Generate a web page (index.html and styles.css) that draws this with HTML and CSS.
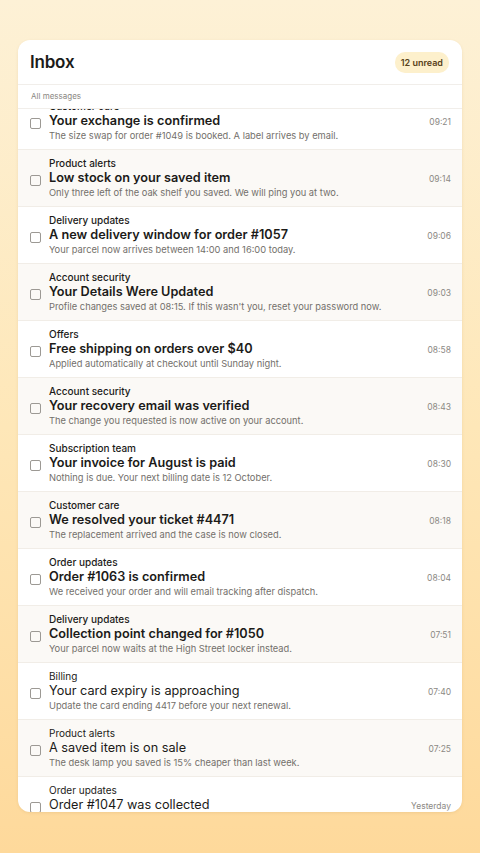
FILE: index.html
```html
<!DOCTYPE html>
<html lang="en">
<head>
  <meta charset="UTF-8">
  <title>Inbox</title>
  <link rel="stylesheet" href="styles.css">
</head>
<body>
  <div class="card">
    <div class="card-head">
      <h1>Inbox</h1>
      <span class="badge">12 unread</span>
    </div>
    <div class="sub">All messages</div>
    <div class="list">
      <ul class="rows">
        <li class="row unread">
          <span class="check"></span>
          <div class="body">
            <div class="sender">Customer care</div>
            <div class="title">Your exchange is confirmed</div>
            <div class="preview">The size swap for order #1049 is booked. A label arrives by email.</div>
          </div>
          <span class="time">09:21</span>
        </li>
        <li class="row unread">
          <span class="check"></span>
          <div class="body">
            <div class="sender">Product alerts</div>
            <div class="title">Low stock on your saved item</div>
            <div class="preview">Only three left of the oak shelf you saved. We will ping you at two.</div>
          </div>
          <span class="time">09:14</span>
        </li>
        <li class="row unread">
          <span class="check"></span>
          <div class="body">
            <div class="sender">Delivery updates</div>
            <div class="title">A new delivery window for order #1057</div>
            <div class="preview">Your parcel now arrives between 14:00 and 16:00 today.</div>
          </div>
          <span class="time">09:06</span>
        </li>
        <li class="row unread">
          <span class="check"></span>
          <div class="body">
            <div class="sender">Account security</div>
            <div class="title">Your Details Were Updated</div>
            <div class="preview">Profile changes saved at 08:15. If this wasn't you, reset your password now.</div>
          </div>
          <span class="time">09:03</span>
        </li>
        <li class="row unread">
          <span class="check"></span>
          <div class="body">
            <div class="sender">Offers</div>
            <div class="title">Free shipping on orders over $40</div>
            <div class="preview">Applied automatically at checkout until Sunday night.</div>
          </div>
          <span class="time">08:58</span>
        </li>
        <li class="row unread">
          <span class="check"></span>
          <div class="body">
            <div class="sender">Account security</div>
            <div class="title">Your recovery email was verified</div>
            <div class="preview">The change you requested is now active on your account.</div>
          </div>
          <span class="time">08:43</span>
        </li>
        <li class="row unread">
          <span class="check"></span>
          <div class="body">
            <div class="sender">Subscription team</div>
            <div class="title">Your invoice for August is paid</div>
            <div class="preview">Nothing is due. Your next billing date is 12 October.</div>
          </div>
          <span class="time">08:30</span>
        </li>
        <li class="row unread">
          <span class="check"></span>
          <div class="body">
            <div class="sender">Customer care</div>
            <div class="title">We resolved your ticket #4471</div>
            <div class="preview">The replacement arrived and the case is now closed.</div>
          </div>
          <span class="time">08:18</span>
        </li>
        <li class="row unread">
          <span class="check"></span>
          <div class="body">
            <div class="sender">Order updates</div>
            <div class="title">Order #1063 is confirmed</div>
            <div class="preview">We received your order and will email tracking after dispatch.</div>
          </div>
          <span class="time">08:04</span>
        </li>
        <li class="row unread">
          <span class="check"></span>
          <div class="body">
            <div class="sender">Delivery updates</div>
            <div class="title">Collection point changed for #1050</div>
            <div class="preview">Your parcel now waits at the High Street locker instead.</div>
          </div>
          <span class="time">07:51</span>
        </li>
        <li class="row">
          <span class="check"></span>
          <div class="body">
            <div class="sender">Billing</div>
            <div class="title">Your card expiry is approaching</div>
            <div class="preview">Update the card ending 4417 before your next renewal.</div>
          </div>
          <span class="time">07:40</span>
        </li>
        <li class="row">
          <span class="check"></span>
          <div class="body">
            <div class="sender">Product alerts</div>
            <div class="title">A saved item is on sale</div>
            <div class="preview">The desk lamp you saved is 15% cheaper than last week.</div>
          </div>
          <span class="time">07:25</span>
        </li>
        <li class="row">
          <span class="check"></span>
          <div class="body">
            <div class="sender">Order updates</div>
            <div class="title">Order #1047 was collected</div>
            <div class="preview">Picked up from the locker on Market Road.</div>
          </div>
          <span class="time">Yesterday</span>
        </li>
      </ul>
    </div>
  </div>
</body>
</html>
```

FILE: styles.css
```css
body {
  margin: 0;
  height: 853px;
  overflow: hidden;
  font-family: Inter, "Noto Sans", sans-serif;
  color: #1c1b19;
  background: linear-gradient(180deg, #fdf1d6 0%, #fee7b8 50%, #fed99b 100%);
}
.card {
  margin: 40px 18px 0;
  height: 772px;
  background: #fff;
  border-radius: 12px;
  box-shadow: 0 1px 3px rgba(150, 110, 40, 0.12);
  display: flex;
  flex-direction: column;
  overflow: hidden;
}
.card-head {
  height: 44px;
  padding: 0 13px 0 12px;
  display: flex;
  align-items: center;
  justify-content: space-between;
  border-bottom: 1px solid #f1eeea;
}
h1 {
  margin: 0;
  font-size: 17px;
  font-weight: 600;
  letter-spacing: -0.2px;
}
.badge {
  background: #fdf0cc;
  color: #58411a;
  font-size: 9px;
  font-weight: 600;
  padding: 5px 6px;
  border-radius: 10px;
}
.sub {
  height: 23px;
  line-height: 23px;
  padding-left: 13px;
  font-size: 8px;
  color: #8a8782;
  border-bottom: 1px solid #f1eeea;
}
.list {
  flex: 1;
  overflow: hidden;
}
.rows {
  list-style: none;
  margin: -16px 0 0;
  padding: 0;
}
.row {
  height: 56px;
  border-bottom: 1px solid #f1ede7;
  display: flex;
  align-items: center;
  padding: 0 11px 0 12px;
}
.row:nth-child(even) {
  background: #fbf9f6;
}
.check {
  width: 9px;
  height: 9px;
  border: 1px solid #9c9994;
  border-radius: 2px;
  margin: 4px 8px 0 0;
  flex: none;
}
.body {
  flex: 1;
  min-width: 0;
}
.sender {
  font-size: 10px;
  line-height: 13px;
  font-weight: 400;
}
.title {
  font-size: 12.7px;
  line-height: 15px;
  font-weight: 400;
}
.unread .sender {
  font-weight: 500;
}
.unread .title {
  font-weight: 600;
}
.preview {
  font-size: 9.3px;
  line-height: 15px;
  color: #73706b;
  white-space: nowrap;
  overflow: hidden;
}
.time {
  font-size: 8.5px;
  color: #8c8984;
  margin-top: 2px;
}
```
